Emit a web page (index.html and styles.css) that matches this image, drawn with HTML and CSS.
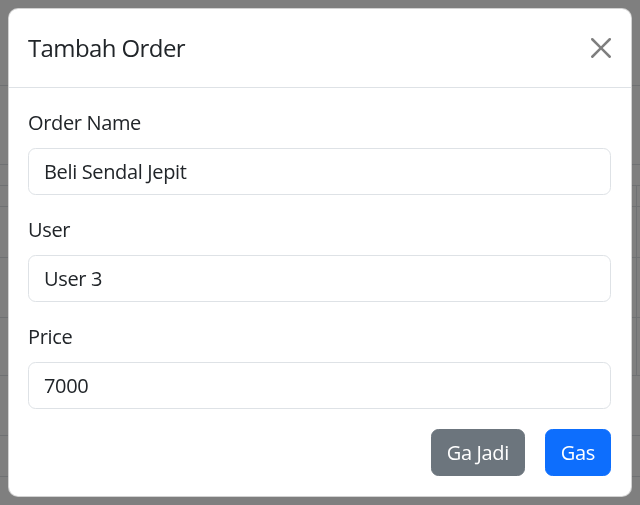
FILE: index.html
```html
<!DOCTYPE html>
<html lang="id">
<head>
<meta charset="utf-8">
<title>Tambah Order</title>
<link rel="stylesheet" href="styles.css">
</head>
<body>
  <div class="page">
    <div class="row row-a"></div>
    <div class="row row-b"></div>
    <div class="row row-c"></div>
    <div class="row row-d cell"></div>
    <div class="row row-e cell"></div>
    <div class="row row-f cell"></div>
    <div class="row row-g cell"></div>
    <div class="row row-h"></div>
    <div class="row row-i"></div>
  </div>
  <div class="backdrop"></div>
  <div class="modal">
    <div class="modal-content">
      <div class="modal-header">
        <h5 class="modal-title">Tambah Order</h5>
        <button class="btn-close" type="button" aria-label="Close">
          <svg viewBox="0 0 16 16" width="20" height="20"><path d="M.293.293a1 1 0 0 1 1.414 0L8 6.586 14.293.293a1 1 0 1 1 1.414 1.414L9.414 8l6.293 6.293a1 1 0 0 1-1.414 1.414L8 9.414l-6.293 6.293a1 1 0 0 1-1.414-1.414L6.586 8 .293 1.707a1 1 0 0 1 0-1.414z"/></svg>
        </button>
      </div>
      <div class="modal-body">
        <div class="group">
          <label class="label">Order Name</label>
          <input class="input" type="text" value="Beli Sendal Jepit">
        </div>
        <div class="group">
          <label class="label">User</label>
          <input class="input" type="text" value="User 3">
        </div>
        <div class="group">
          <label class="label">Price</label>
          <input class="input" type="text" value="7000">
        </div>
        <div class="actions">
          <button class="btn btn-secondary" type="button">Ga Jadi</button>
          <button class="btn btn-primary" type="button">Gas</button>
        </div>
      </div>
    </div>
  </div>
</body>
</html>
```

FILE: styles.css
```css
* { box-sizing: border-box; }
html, body {
  margin: 0;
  padding: 0;
  width: 640px;
  height: 505px;
  overflow: hidden;
  background: #fff;
  font-family: "Segoe UI", "Open Sans", "Noto Sans", sans-serif;
  color: #212529;
}
.page { width: 640px; }
.row { border-bottom: 1px solid #dee2e6; }
.row-a { height: 86px; }
.row-b { height: 79px; }
.row-c { height: 21px; }
.row-d { height: 21px; }
.row-e { height: 51px; }
.row-f { height: 60px; }
.row-g { height: 58px; }
.row-h { height: 60px; }
.row-i { height: 41px; }
.cell { background: linear-gradient(to right, transparent 636px, #dee2e6 636px, #dee2e6 637px, transparent 637px); }

.backdrop {
  position: fixed;
  inset: 0;
  background: rgba(0, 0, 0, 0.5);
}
.modal {
  position: fixed;
  inset: 0;
  padding: 8px;
}
.modal-content {
  background: #fff;
  border: 1px solid rgba(0, 0, 0, 0.175);
  border-radius: 10px;
}
.modal-header {
  display: flex;
  align-items: center;
  justify-content: space-between;
  padding: 20px 20px 20px 19px;
  border-bottom: 1px solid #dee2e6;
}
.modal-title {
  margin: 0;
  font-size: 24px;
  line-height: 38px;
  font-weight: 400;
  letter-spacing: -0.6px;
}
.btn-close {
  border: 0;
  background: transparent;
  padding: 0;
  width: 20px;
  height: 20px;
  display: flex;
}
.btn-close svg { fill: #000; opacity: 0.5; }

.modal-body { padding: 20px 20px 20px 19px; }
.group { margin-bottom: 20px; }
.label {
  display: block;
  font-size: 20px;
  line-height: 30px;
  margin-bottom: 10px;
  letter-spacing: -0.35px;
}
.input {
  display: block;
  width: 100%;
  height: 47px;
  padding: 7.5px 15px;
  font: inherit;
  font-size: 20px;
  line-height: 30px;
  letter-spacing: -0.35px;
  color: #212529;
  border: 1px solid #dee2e6;
  border-radius: 7.5px;
  background: #fff;
  outline: none;
}
.actions {
  display: flex;
  justify-content: flex-end;
  gap: 20px;
}
.btn {
  font: inherit;
  font-size: 20px;
  line-height: 30px;
  letter-spacing: -0.35px;
  padding: 7.5px 15px;
  border-radius: 7.5px;
  color: #fff;
  border: 1px solid transparent;
}
.btn-secondary { background: #6c757d; border-color: #6c757d; }
.btn-primary { background: #0d6efd; border-color: #0d6efd; }
```
